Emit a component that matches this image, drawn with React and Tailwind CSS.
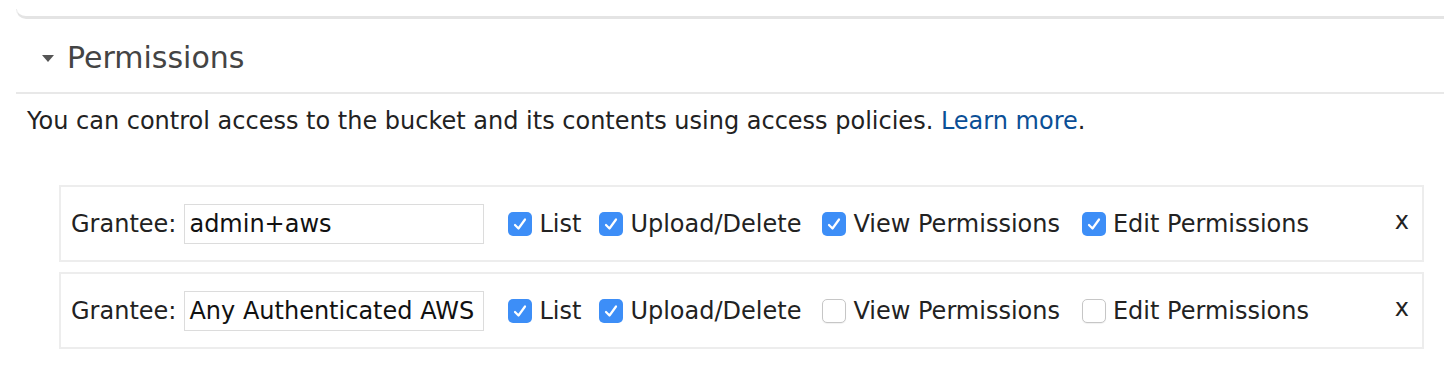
import { useState } from 'react';

const font = { fontFamily: '"DejaVu Sans", Verdana, sans-serif' };

function Check({ checked, label, onChange, space }) {
    return (<label className={`flex items-center cursor-pointer ${space}`}>
      <span className={checked
            ? 'w-[24px] h-[24px] rounded-[5px] bg-[#3d8ef7] flex items-center justify-center'
            : 'w-[24px] h-[24px] rounded-[5px] bg-white border border-[#c6c6c6] shadow-[0_1px_1px_rgba(0,0,0,0.06)] flex items-center justify-center'} onClick={onChange}>
        {checked && (<svg width="18" height="18" viewBox="0 0 18 18" fill="none">
            <path d="M4 10 L7.5 13.5 L14 4.5" stroke="white" strokeWidth="2.2" strokeLinecap="round" strokeLinejoin="round"/>
          </svg>)}
      </span>
      <span className="ml-[7px] text-[24px] text-[#222]">{label}</span>
    </label>);
}

const perms = [
    { label: 'List', space: 'mr-[18px]' },
    { label: 'Upload/Delete', space: 'mr-[21px]' },
    { label: 'View Permissions', space: 'mr-[22px]' },
    { label: 'Edit Permissions', space: '' },
];

function GranteeRow({ grantee, initial }) {
    const [checked, setChecked] = useState(initial);
    const toggle = (i) => setChecked(checked.map((p, j) => (j === i ? !p : p)));
    return (<div className="flex items-center h-[77px] border-2 border-[#ededed] pl-[10px] pr-[12px]">
      <span className="text-[24px] text-[#222] mr-[8px]">Grantee:</span>
      <input readOnly value={grantee} className="w-[300px] h-[40px] border border-[#dcdcdc] px-[4px] text-[24px] text-[#111] outline-none" style={font}/>
      <div className="flex items-center ml-[24px]">
        {perms.map((p, i) => (<Check key={p.label} label={p.label} space={p.space} checked={checked[i]} onChange={() => toggle(i)}/>))}
      </div>
      <span className="ml-auto text-[24px] text-[#222] -mt-[6px] mr-[1px]">x</span>
    </div>);
}

export default function App() {
    return (<div className="bg-white w-[1456px] h-[374px] overflow-hidden" style={font}>
      <div className="ml-[16px] mt-[9px] w-[1428px] h-[10px] border-b-[3px] border-l border-b-[#e4e4e4] border-l-[#ececec] rounded-bl-[12px]"/>

      <div className="ml-[16px] w-[1428px]">
        <div className="flex items-center h-[75px] border-b-2 border-[#e8e8e8] pl-[26px] pt-[4px]">
          <svg width="12" height="8" viewBox="0 0 12 8" className="mr-[13px] mt-[2px]">
            <path d="M0 0 L12 0 L6 7 Z" fill="#555"/>
          </svg>
          <span className="text-[30px] text-[#444]">Permissions</span>
        </div>
        <p className="pl-[11px] pt-[12px] text-[24px] text-[#222] leading-[30px]">
          You can control access to the bucket and its contents using access policies. <a href="#" className="text-[#0b4f96]">Learn more</a>.
        </p>
      </div>

      <div className="ml-[59px] w-[1365px] mt-[49px] flex flex-col gap-[10px]">
        <GranteeRow grantee="admin+aws" initial={[true, true, true, true]}/>
        <GranteeRow grantee="Any Authenticated AWS User" initial={[true, true, false, false]}/>
      </div>
    </div>);
}
